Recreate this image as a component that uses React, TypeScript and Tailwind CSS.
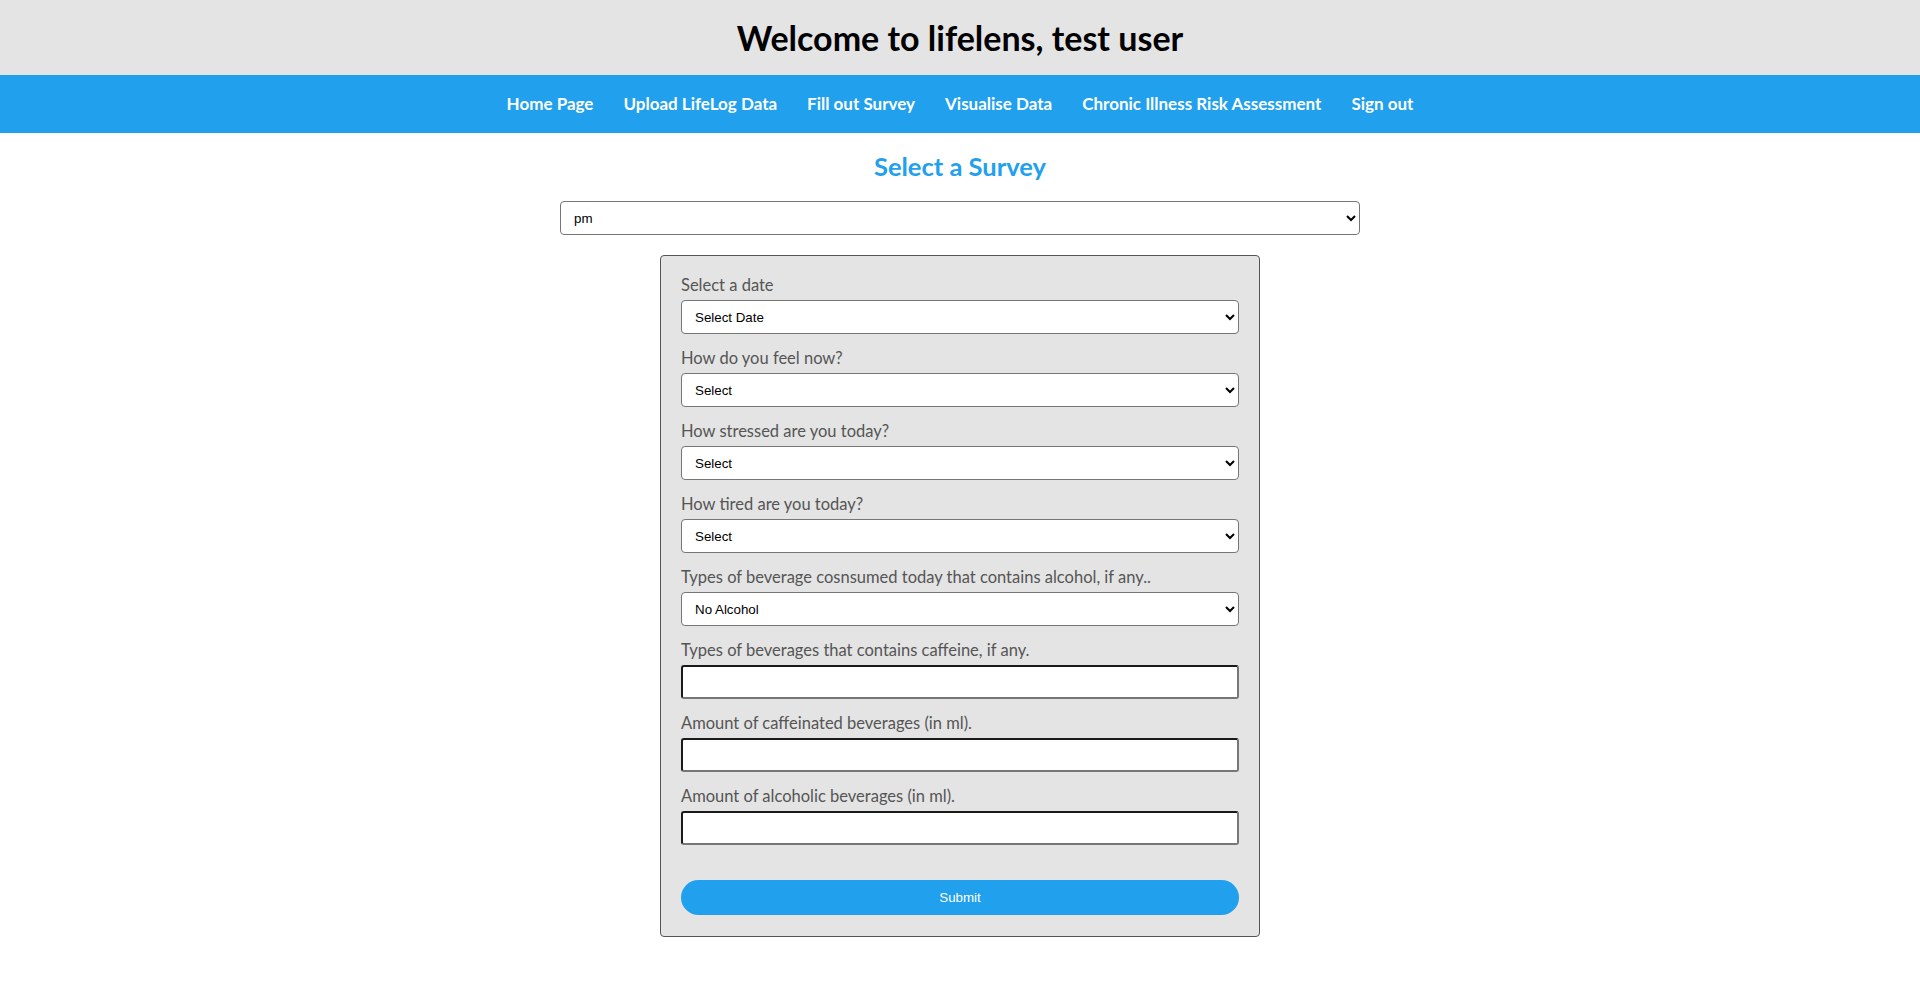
import React from 'react';

const navItems = [
  'Home Page',
  'Upload LifeLog Data',
  'Fill out Survey',
  'Visualise Data',
  'Chronic Illness Risk Assessment',
  'Sign out',
];

const selectFields = [
  { label: 'Select a date', value: 'Select Date' },
  { label: 'How do you feel now?', value: 'Select' },
  { label: 'How stressed are you today?', value: 'Select' },
  { label: 'How tired are you today?', value: 'Select' },
  { label: 'Types of beverage cosnsumed today that contains alcohol, if any..', value: 'No Alcohol' },
];

const textFields = [
  'Types of beverages that contains caffeine, if any.',
  'Amount of caffeinated beverages (in ml).',
  'Amount of alcoholic beverages (in ml).',
];

const font = { fontFamily: 'Lato, "Open Sans", sans-serif' };
const arial = { fontFamily: '"Liberation Sans", Arial, sans-serif' };

export default function App() {
  return (
    <div className="min-h-screen bg-white" style={font}>
      <header className="h-[75px] bg-[#e4e4e4] flex items-center justify-center">
        <h1 className="text-[34px] font-bold text-black">Welcome to lifelens, test user</h1>
      </header>
      <nav className="h-[58px] bg-[#21a0ee] flex items-center justify-center gap-[30px]">
        {navItems.map((item) => (
          <a key={item} href="#" className="text-white font-bold text-[17px]">
            {item}
          </a>
        ))}
      </nav>

      <main className="flex flex-col items-center">
        <h2 className="mt-[18px] text-[25.5px] leading-[30px] font-bold text-[#21a0ee]">Select a Survey</h2>
        <select
          defaultValue="pm"
          className="mt-[20px] w-[800px] h-[34px] bg-white border border-[#767676] rounded-[4px] pl-[9px] pr-[4px] text-[13.33px] text-black"
          style={arial}
        >
          <option value="pm">pm</option>
          <option value="am">am</option>
        </select>

        <form className="mt-[20px] w-[600px] bg-[#e4e4e4] border border-[#555] rounded-[4px] px-[20px] pt-[17px] pb-[21px]">
          {selectFields.map((f) => (
            <div key={f.label} className="mb-[12px]">
              <label className="block text-[16.5px] leading-[24px] text-[#555]">{f.label}</label>
              <select
                defaultValue={f.value}
                className="mt-[3px] w-full h-[34px] bg-white border border-[#767676] rounded-[4px] pl-[9px] pr-[4px] text-[13.33px] text-black"
                style={arial}
              >
                <option value={f.value}>{f.value}</option>
              </select>
            </div>
          ))}
          {textFields.map((t) => (
            <div key={t} className="mb-[12px]">
              <label className="block text-[16.5px] leading-[24px] text-[#555]">{t}</label>
              <input
                type="text"
                className="mt-[3px] w-full h-[34px] bg-white border-2 border-t-[#1a1a1a] border-l-[#1a1a1a] border-r-[#767676] border-b-[#767676] rounded-[3px] px-[8px]"
              />
            </div>
          ))}
          <button
            type="button"
            className="mt-[23px] w-full h-[35px] rounded-full bg-[#21a0ee] text-white text-[13.33px]"
            style={arial}
          >
            Submit
          </button>
        </form>
      </main>
    </div>
  );
}
